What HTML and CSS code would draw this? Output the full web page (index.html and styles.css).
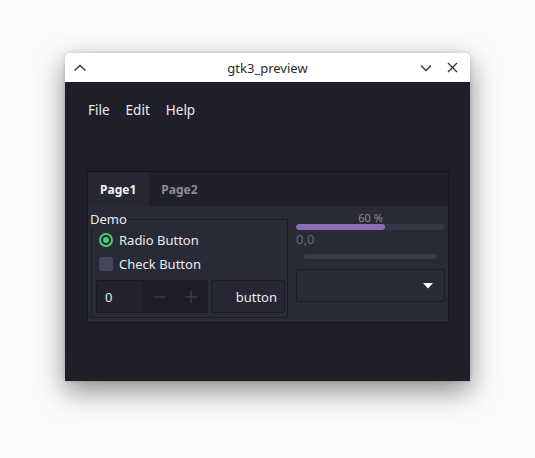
FILE: index.html
```html
<!DOCTYPE html>
<html>
<head>
<meta charset="utf-8">
<link rel="stylesheet" href="styles.css">
</head>
<body>
<div class="window">
  <div class="titlebar">
    <div class="tb-left">
      <svg class="tb-icon" width="14" height="10" viewBox="0 0 14 10"><path d="M1.5 7.5 L7 2.5 L12.5 7.5" fill="none" stroke="#333" stroke-width="1.3"/></svg>
    </div>
    <div class="title">gtk3_preview</div>
    <div class="tb-right">
      <svg class="tb-icon" width="12" height="10" viewBox="0 0 12 10"><path d="M1 2.5 L6 7.5 L11 2.5" fill="none" stroke="#333" stroke-width="1.3"/></svg>
      <svg class="tb-icon" width="11" height="11" viewBox="0 0 11 11"><path d="M1 1 L10 10 M10 1 L1 10" fill="none" stroke="#333" stroke-width="1.3"/></svg>
    </div>
  </div>
  <div class="body">
    <div class="menubar">
      <span class="menu-item">File</span>
      <span class="menu-item">Edit</span>
      <span class="menu-item">Help</span>
    </div>
    <div class="notebook">
      <div class="tabs">
        <div class="tab active">Page1</div>
        <div class="tab">Page2</div>
      </div>
      <div class="page">
        <fieldset class="frame">
          <legend class="frame-label">Demo</legend>
          <div class="row">
            <span class="radio"><span class="radio-dot"></span></span>
            <span class="label">Radio Button</span>
          </div>
          <div class="row">
            <span class="check"></span>
            <span class="label">Check Button</span>
          </div>
          <div class="controls">
            <div class="spin">
              <div class="spin-entry">0</div>
              <div class="spin-btn">
                <svg width="14" height="14" viewBox="0 0 14 14"><path d="M1 7 H13" stroke="#4a4b57" stroke-width="1"/></svg>
              </div>
              <div class="spin-btn">
                <svg width="14" height="14" viewBox="0 0 14 14"><path d="M1 7 H13 M7 1 V13" stroke="#4a4b57" stroke-width="1"/></svg>
              </div>
            </div>
            <div class="button">button</div>
          </div>
        </fieldset>
        <div class="side">
          <div class="progress-label">60 %</div>
          <div class="progress"><div class="progress-fill" style="width:60%"></div></div>
          <div class="value">0,0</div>
          <div class="scale"><div class="scale-trough"></div></div>
          <div class="combo">
            <svg width="10" height="6" viewBox="0 0 10 6"><path d="M0 0 H10 L5 5.5 Z" fill="#ffffff"/></svg>
          </div>
        </div>
      </div>
    </div>
  </div>
</div>
</body>
</html>
```

FILE: styles.css
```css
* { box-sizing: border-box; }
html, body { margin: 0; padding: 0; }
body {
  background: #fbfbfb;
  font-family: "Noto Sans", "DejaVu Sans", sans-serif;
  padding: 53px 0 0 65px;
  width: 535px;
  height: 458px;
  overflow: hidden;
}
.window {
  width: 405px;
  height: 328px;
  display: flex;
  flex-direction: column;
  box-shadow: 0 10px 28px rgba(0,0,0,0.45), 0 0 4px rgba(0,0,0,0.15);
  border-radius: 5px 5px 0 0;
}
.titlebar {
  height: 29px;
  background: #ffffff;
  border-radius: 5px 5px 0 0;
  display: flex;
  align-items: center;
}
.tb-left {
  width: 80px;
  padding-left: 8px;
  display: flex;
  align-items: center;
}
.title {
  flex: 1;
  text-align: center;
  font-size: 13px;
  color: #2a2a2a;
}
.tb-right {
  width: 80px;
  display: flex;
  justify-content: flex-end;
  align-items: center;
  gap: 15px;
  padding-right: 12px;
}
.tb-icon { display: block; }
.body {
  flex: 1;
  background: #1e1f29;
  display: flex;
  flex-direction: column;
}
.menubar {
  height: 56px;
  display: flex;
  align-items: center;
  padding-left: 15px;
}
.menu-item {
  padding: 0 8px;
  font-size: 13.5px;
  color: #ececec;
}
.notebook {
  margin-top: 33px;
  margin-left: 22px;
  width: 362px;
  height: 152px;
  border: 1px solid #16171e;
  display: flex;
  flex-direction: column;
}
.tabs {
  height: 34px;
  background: #1f202a;
  display: flex;
}
.tab {
  padding: 0 13px 0 12px;
  display: flex;
  align-items: center;
  font-size: 12px;
  font-weight: bold;
  color: #8a8b96;
}
.tab.active {
  background: #262733;
  color: #f2f2f2;
}
.page {
  flex: 1;
  background: #282a36;
  display: flex;
  gap: 8px;
  padding: 5px 3px 4px 3px;
}
.frame {
  margin: 0;
  width: 197px;
  min-width: 0;
  border: 1px solid #1b1c25;
  padding: 0 2px 4px 4px;
  display: flex;
  flex-direction: column;
}
.frame-label {
  padding: 0;
  margin-left: -6px;
  font-size: 13px;
  line-height: 17px;
  color: #ececec;
}
.row {
  height: 24px;
  display: flex;
  align-items: center;
  padding-left: 3px;
  gap: 6px;
}
.label {
  font-size: 13px;
  color: #ececec;
}
.radio {
  width: 14px;
  height: 14px;
  border-radius: 50%;
  border: 2px solid #4fcb79;
  background: #23242e;
  display: flex;
  align-items: center;
  justify-content: center;
}
.radio-dot {
  width: 6px;
  height: 6px;
  border-radius: 50%;
  background: #4fcb79;
}
.check {
  width: 14px;
  height: 14px;
  border-radius: 2px;
  background: #444658;
}
.controls {
  margin-top: 4px;
  display: flex;
  gap: 3px;
  height: 33px;
}
.spin {
  width: 112px;
  display: flex;
  border: 1px solid #191a22;
  border-radius: 2px;
}
.spin-entry {
  width: 46px;
  background: #22232d;
  font-size: 13px;
  color: #ececec;
  display: flex;
  align-items: center;
  padding-left: 8px;
}
.spin-btn {
  flex: 1;
  background: #1c1d26;
  display: flex;
  align-items: center;
  justify-content: center;
}
.button {
  flex: 1;
  background: #262733;
  border: 1px solid #1b1c24;
  border-radius: 2px;
  font-size: 13px;
  color: #ececec;
  display: flex;
  align-items: center;
  justify-content: flex-end;
  padding-right: 7px;
}
.side {
  flex: 1;
  display: flex;
  flex-direction: column;
}
.progress-label {
  text-align: center;
  font-size: 11px;
  line-height: 13px;
  color: #8c8d98;
}
.progress {
  height: 6px;
  border-radius: 3px;
  background: #353745;
  overflow: hidden;
}
.progress-fill {
  height: 100%;
  background: #8a6db9;
  border-radius: 3px;
}
.value {
  font-size: 13px;
  line-height: 17px;
  color: #666876;
  margin-top: 1px;
}
.scale {
  height: 16px;
  display: flex;
  align-items: center;
  padding: 0 8px;
}
.scale-trough {
  flex: 1;
  height: 5px;
  border-radius: 3px;
  background: #393b4a;
}
.combo {
  margin-top: 5px;
  height: 33px;
  width: 149px;
  border: 1px solid #1a1b23;
  border-radius: 2px;
  background: #282a36;
  display: flex;
  align-items: center;
  justify-content: flex-end;
  padding-right: 11px;
}
.combo svg { display: block; }
```
